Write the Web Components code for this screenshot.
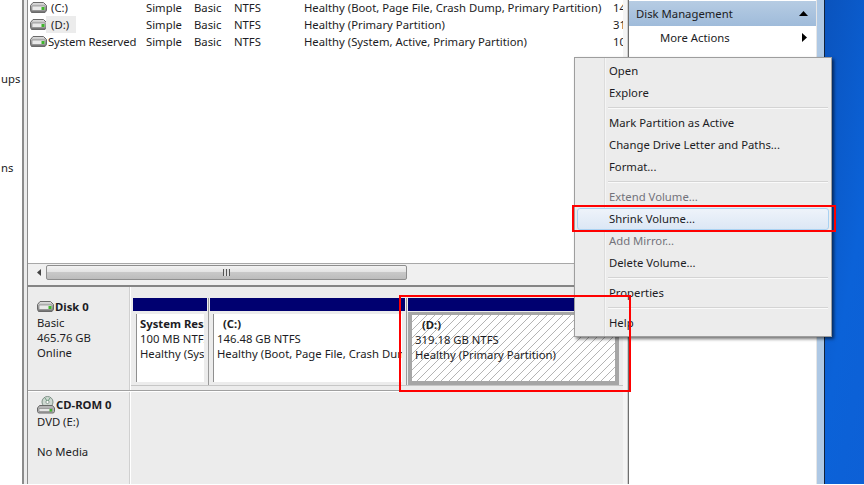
<!DOCTYPE html>
<html><head><meta charset="utf-8">
<style>
html,body{margin:0;padding:0;width:864px;height:485px;overflow:hidden;background:#fff}
body{font:11.3px/17px "Noto Sans",sans-serif;color:#1c1c24}
</style></head><body>
<dm-app></dm-app>
<script>
const FONT='"Noto Sans",sans-serif';
const hdd=`<svg width="17" height="11" viewBox="0 0 17 11"><defs><linearGradient id="g" x1="0" y1="0" x2="0" y2="1"><stop offset="0" stop-color="#e4e4e4"/><stop offset=".5" stop-color="#a9a9a9"/><stop offset="1" stop-color="#6d6d6d"/></linearGradient></defs><path d="M3 .5h10.500l3 3v5l-1.500 2H1.500L.5 8.500v-5z" fill="url(#g)" stroke="#6a6a6a"/><path d="M2 4h13v4.500H2z" fill="#e9e9e9" stroke="#8a8a8a" stroke-width=".7"/><rect x="11.500" y="5" width="3" height="3" fill="#3fb52c"/></svg>`;
const cd=`<svg width="18" height="18" viewBox="0 0 18 18"><circle cx="10.500" cy="6" r="5.500" fill="#cfd9d2" stroke="#7f9187"/><circle cx="10.500" cy="6" r="1.600" fill="#fff" stroke="#6f8076" stroke-width=".7"/><path d="M8 2l2 3M13 2l-2 3" stroke="#6e9c80"/><path d="M2.500 9.500h13l2 2.500v3.500l-1 1.500h-15l-1-1.500V12z" fill="#b4b4b4" stroke="#686868"/><path d="M2 12.500h13.500v3H2z" fill="#e6e6e6" stroke="#8a8a8a" stroke-width=".7"/><rect x="12.500" y="13" width="2.500" height="2.500" fill="#3fb52c"/></svg>`;

class Base extends HTMLElement{
  constructor(){super();this.attachShadow({mode:'open'});}
  render(h){this.shadowRoot.innerHTML=h;}
}
class DmRow extends Base{connectedCallback(){
  const sel=this.hasAttribute('sel'),wide=this.hasAttribute('wide');
  this.render(`<style>
  :host{display:grid;grid-template-columns:19px 97px 48px 40px 70px 309px 40px;height:17px;line-height:17px;white-space:nowrap;padding-left:2px}
  .i{display:flex;align-items:center}
  .n{padding-left:2px;${wide?'margin-left:-3px;letter-spacing:-.13px;':''}}
  .n span{display:inline-block;${sel?'background:#ececec;width:30px;margin-left:-5px;padding-left:5px;box-sizing:border-box;':''}}
  .c{overflow:hidden}
  </style><div class="i">${hdd}</div><div class="n"><span>${this.getAttribute('name')}</span></div><div>Simple</div><div>Basic</div><div>NTFS</div><div>${this.getAttribute('status')}</div><div class="c">${this.getAttribute('cap')}</div>`);
}}
class DmScroll extends Base{connectedCallback(){
  this.render(`<style>
  :host{display:flex;align-items:center;height:18px;background:#f0f0f0;border-top:1px solid #a8a8a8;box-sizing:border-box;padding-left:5px}
  .a{width:13px;display:flex;justify-content:center}
  .t{width:361px;height:15px;box-sizing:border-box;border:1px solid #8e8e8e;border-radius:2px;background:linear-gradient(#f3f3f3,#e3e3e3 45%,#c8c8c8 50%,#bcbcbc);display:flex;align-items:center;justify-content:center}
  .g{width:7px;height:7px;background:repeating-linear-gradient(90deg,#555 0 1px,#ddd 1px 3px)}
  </style><div class="a"><svg width="5" height="7"><path d="M4 0v7L0 3.500z" fill="#444"/></svg></div><div class="t"><div class="g"></div></div>`);
}}
class DmLabel extends Base{connectedCallback(){
  this.render(`<style>
  :host{display:block;width:103px;box-sizing:border-box;padding:${this.getAttribute('pad')||'7px'} 0 0 9px;background:#ececec;border-right:1px solid #fff;box-shadow:inset -1px 0 #d0d0d0;line-height:15px}
  .h{display:flex;align-items:center;font-weight:700;height:17px;margin-bottom:${this.getAttribute('icon')==='cd'?'1px':'0'};white-space:nowrap}
  .h span{margin-left:1px}
  slot{display:block}
  </style><div class="h">${this.getAttribute('icon')==='cd'?cd:hdd}<span>${this.getAttribute('title')}</span></div><slot></slot>`);
}}
class DmPartition extends Base{connectedCallback(){
  const s=this.hasAttribute('selected');
  this.render(`<style>
  :host{display:flex;flex-direction:column;box-sizing:border-box;flex:none;width:${this.getAttribute('w')}px;height:87px}
  .b{height:13px;background:#000070;flex:none}
  .o{flex:1;margin-top:${s?'1px':'3px'};padding:${s?'3px 4px 4px 4px':'0 3px 3px 3px'};background:${s?'#a6a6a6':'#ececec'};min-height:0;display:flex}
  .p{flex:1;min-width:0;overflow:hidden;white-space:nowrap;line-height:15px;padding:2px 0 0 3px;box-sizing:border-box;${s?'background:repeating-linear-gradient(135deg,#fff 0 4.600px,#b4b4b4 4.600px 5.650px)':'background:#fff;border-left:1px solid #8f8f8f'}}
  </style><div class="b"></div><div class="o"><div class="p"><slot></slot></div></div>`);
}}
class DmMenu extends Base{connectedCallback(){
  this.render(`<style>
  :host{position:absolute;left:574px;top:57px;width:258px;height:280px;box-sizing:border-box;border:1px solid #9e9e9e;background:linear-gradient(90deg,#ececec 29px,#dcdcdc 29px,#dcdcdc 30px,#f5f5f5 30px,#f5f5f5 31px,#ececec 31px);padding:2px 2px;box-shadow:2px 2px 3px rgba(0,0,0,.55);z-index:2}
  </style><slot></slot>`);
}}
class DmItem extends Base{connectedCallback(){
  const hot=this.hasAttribute('hot'),dis=this.hasAttribute('disabled');
  this.render(`<style>
  :host{display:block;height:22px;box-sizing:border-box;line-height:${hot?20:22}px;padding-left:${hot?31:32}px;color:${dis?'#73737b':'inherit'};white-space:nowrap;${hot?'border:1px solid #a8d1f2;border-radius:3px;background:linear-gradient(#eef3fa,#dce7f5);':''}}
  </style><slot></slot>`);
}}
class DmSep extends Base{connectedCallback(){
  this.render(`<style>:host{display:block;height:8px;box-sizing:border-box;margin-left:31px;margin-right:1px;padding-top:3px}
  div{height:1px;background:#d4d4d4;border-bottom:1px solid #fafafa}</style><div></div>`);
}}
class DmRed extends Base{connectedCallback(){
  const [l,t,w,h]=this.getAttribute('box').split(',');
  this.render(`<style>:host{position:absolute;left:${l}px;top:${t}px;width:${w}px;height:${h}px;box-sizing:border-box;border:2px solid #f00;z-index:3;pointer-events:none}</style>`);
}}
class DmPane extends Base{connectedCallback(){
  this.render(`<style>
  :host{display:block;width:187px;background:#fff;flex:none}
  .t{margin-top:1px;height:25px;background:linear-gradient(#b6cce3,#9fbbda);display:flex;align-items:center;justify-content:space-between;padding:0 7px;box-sizing:border-box}
  .m{height:22px;display:flex;align-items:center;justify-content:space-between;padding:0 9px 0 31px}
  svg{display:block}
  </style><div class="t"><span>Disk Management</span><svg width="9" height="5" style="margin-right:1px"><path d="M4.500 0L9 5H0z" fill="#000"/></svg></div>
  <div class="m"><span>More Actions</span><svg width="5" height="9"><path d="M0 0l5 4.500L0 9z" fill="#000"/></svg></div>`);
}}
class DmApp extends Base{connectedCallback(){
  this.render(`<style>
  :host{display:flex;width:864px;height:484px;position:relative;font:11.3px/17px ${FONT}}
  .left{width:22px;flex:none;overflow:hidden;white-space:nowrap;padding-left:1px;box-sizing:border-box;padding-top:70px}
  .left div{height:17px}
  .left div+div{margin-top:72px}
  .bar{width:6px;flex:none;box-sizing:border-box;border-left:2px solid #8c8c8c;border-right:1px solid #8c8c8c;background:#ececec}
  .center{width:595px;flex:none;display:flex;flex-direction:column;min-width:0;background:#ececec}
  .list{height:263px;flex:none;background:#fff;overflow:hidden}
  .rows{margin-top:-1px}
  .gut{height:4px;flex:none;background:#f0f0f0}
  .split{height:2px;background:#858585;flex:none}
  .disk{display:flex;height:104px;flex:none;box-sizing:border-box;border-bottom:1px solid #a0a0a0}
  .disk.last{border:0;border-top:1px solid #fff;height:auto;flex:1}
  .parts{flex:1;padding:11px 0 0 2px;background:#ececec}
  .prow{display:flex;height:88px;box-sizing:border-box;border-bottom:1px solid #c6c6c6;margin-left:-2px;padding-left:2px}
  .s{width:3px;flex:none;background:linear-gradient(90deg,transparent 1px,#9a9a9a 1px,#9a9a9a 2px,transparent 2px)}
  .rest{flex:1;background:#ececec}
  .vr{width:5px;flex:none;background:#f4f4f4;box-shadow:inset -1px 0 #d0d0d0}
  .dark{width:1px;flex:none;background:#6e6e6e}
  .edge{flex:none;width:1px;background:#e6e6e6}
  .glass{flex:none;width:7px;background:#aec8e4}
  .line{flex:none;width:1px;background:#12233c}
  .desk{flex:1;background:linear-gradient(100deg,#0a53bd,#0b62d8 60%,#0d60d6)}
  b{display:block;height:15px}
  </style>
  <div class="left"><div>ups</div><div>ns</div></div>
  <div class="bar"></div>
  <div class="center">
    <div class="list"><div class="rows">
      <dm-row name="(C:)" status="Healthy (Boot, Page File, Crash Dump, Primary Partition)" cap="146.48 GB"></dm-row>
      <dm-row name="(D:)" sel status="Healthy (Primary Partition)" cap="319.18 GB"></dm-row>
      <dm-row name="System Reserved" wide status="Healthy (System, Active, Primary Partition)" cap="100 MB"></dm-row>
    </div></div>
    <dm-scroll></dm-scroll>
    <div class="gut"></div>
    <div class="split"></div>
    <div class="disk">
      <dm-label title="Disk 0" pad="11px"><div>Basic</div><div>465.76 GB</div><div>Online</div></dm-label>
      <div class="parts"><div class="prow">
        <dm-partition w="74"><b>System Reserved</b><div>100 MB NTFS</div><div>Healthy (System, Active, Primary Partition)</div></dm-partition>
        <div class="s"></div>
        <dm-partition w="195"><b style="padding-left:6px">(C:)</b><div>146.48 GB NTFS</div><div>Healthy (Boot, Page File, Crash Dump, Primary Partition)</div></dm-partition>
        <div class="s"></div>
        <dm-partition w="211" selected><b style="padding-left:7px">(D:)</b><div>319.18 GB NTFS</div><div>Healthy (Primary Partition)</div></dm-partition>
      </div></div>
    </div>
    <div class="disk last">
      <dm-label title="CD-ROM 0" icon="cd" pad="4px"><div style="height:30px">DVD (E:)</div><div>No Media</div></dm-label>
      <div class="rest"></div>
    </div>
  </div>
  <div class="vr"></div>
  <div class="dark"></div>
  <dm-pane></dm-pane>
  <div class="edge"></div><div class="glass"></div><div class="line"></div><div class="desk"></div>
  <dm-menu>
    <dm-item>Open</dm-item><dm-item>Explore</dm-item><dm-sep></dm-sep>
    <dm-item>Mark Partition as Active</dm-item><dm-item>Change Drive Letter and Paths...</dm-item><dm-item>Format...</dm-item><dm-sep></dm-sep>
    <dm-item disabled>Extend Volume...</dm-item><dm-item hot>Shrink Volume...</dm-item><dm-item disabled>Add Mirror...</dm-item><dm-item>Delete Volume...</dm-item><dm-sep></dm-sep>
    <dm-item>Properties</dm-item><dm-sep></dm-sep><dm-item>Help</dm-item>
  </dm-menu>
  <dm-red box="572,205,264,27"></dm-red>
  <dm-red box="399,295,232,97"></dm-red>`);
}}
[['dm-row',DmRow],['dm-scroll',DmScroll],['dm-label',DmLabel],['dm-partition',DmPartition],['dm-menu',DmMenu],['dm-item',DmItem],['dm-sep',DmSep],['dm-red',DmRed],['dm-pane',DmPane],['dm-app',DmApp]].forEach(([n,c])=>customElements.define(n,c));
</script>
</body></html>
